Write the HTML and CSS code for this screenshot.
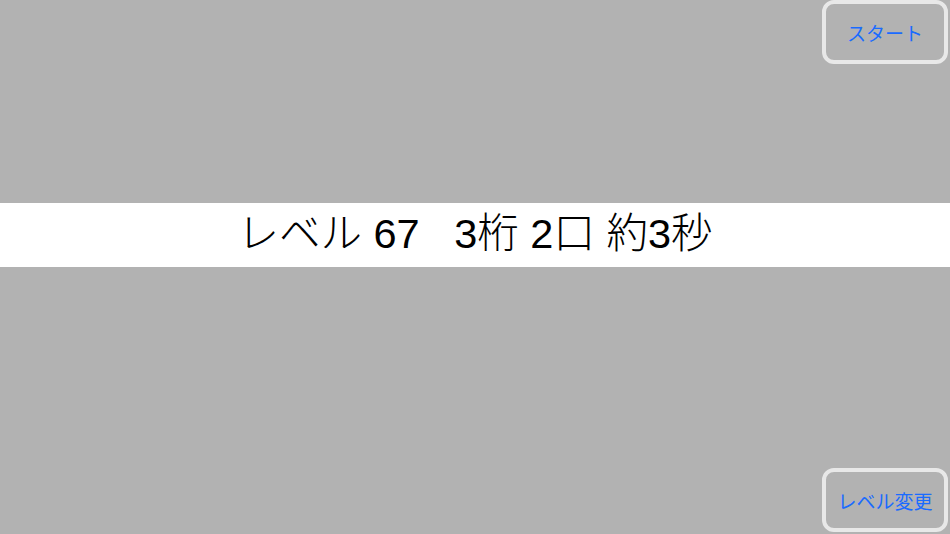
FILE: index.html
```html
<!DOCTYPE html>
<html lang="ja">
<head>
<meta charset="utf-8">
<link rel="stylesheet" href="styles.css">
</head>
<body>
<div class="screen">
  <div class="top">
    <div class="btn">スタート</div>
  </div>
  <div class="band"><span class="info">レベル 67   3桁 2口 約3秒</span></div>
  <div class="bottom">
    <div class="btn">レベル変更</div>
  </div>
</div>
</body>
</html>
```
FILE: styles.css
```css
html, body {
  margin: 0;
  padding: 0;
}
body {
  width: 950px;
  height: 534px;
  overflow: hidden;
  background: #b2b2b2;
  font-family: "Noto Sans CJK JP", "Noto Sans", sans-serif;
}
.screen {
  display: grid;
  grid-template-rows: 203px 64px 1fr;
  height: 534px;
}
.top {
  display: flex;
  justify-content: flex-end;
  align-items: flex-start;
  padding: 0 2px 0 0;
}
.bottom {
  display: flex;
  justify-content: flex-end;
  align-items: flex-end;
  padding: 0 2px 2px 0;
}
.btn {
  box-sizing: border-box;
  width: 126px;
  height: 64px;
  border: 4px solid #e8e8e8;
  border-radius: 12px;
  display: flex;
  align-items: center;
  justify-content: center;
  color: #1a6bff;
  font-size: 19px;
}
.band {
  background: #ffffff;
  display: flex;
  align-items: center;
  justify-content: center;
}
.info {
  white-space: pre;
  font-family: "Liberation Sans", "Noto Sans CJK JP", sans-serif;
  font-size: 41.5px;
  font-weight: 300;
  color: #000;
  line-height: 1;
  padding-bottom: 2px;
}
```
